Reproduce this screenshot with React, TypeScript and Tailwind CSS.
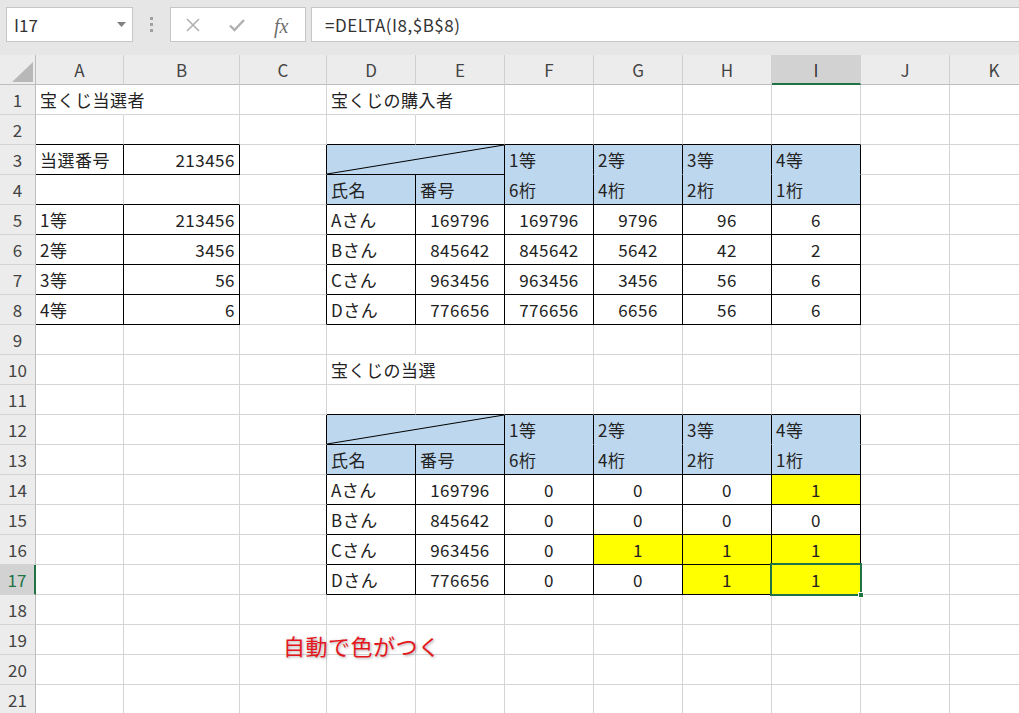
import React from "react";

const colLetters = ["A", "B", "C", "D", "E", "F", "G", "H", "I", "J", "K"];
const colW = [
  "w-[88px]",
  "w-[116px]",
  "w-[87px]",
  "w-[89px]",
  "w-[89px]",
  "w-[89px]",
  "w-[89px]",
  "w-[89px]",
  "w-[89px]",
  "w-[89px]",
  "w-[89px]",
];

type Cell = { t: string; a: "l" | "r" | "c"; bg?: "blue" | "yellow" };

const data: Record<string, Cell> = {};
const set = (r: number, c: number, t: string, a: "l" | "r" | "c" = "l", bg?: "blue" | "yellow") => {
  data[`${r},${c}`] = { t, a, bg };
};

set(1, 0, "宝くじ当選者");
set(1, 3, "宝くじの購入者");
set(3, 0, "当選番号");
set(3, 1, "213456", "r");
["1等", "2等", "3等", "4等"].forEach((t, i) => set(5 + i, 0, t));
["213456", "3456", "56", "6"].forEach((t, i) => set(5 + i, 1, t, "r"));
set(10, 3, "宝くじの当選");

const overflowCells = new Set(["1,0", "1,3", "10,3"]);

const headerTop = ["1等", "2等", "3等", "4等"];
const headerSub = ["氏名", "番号", "6桁", "4桁", "2桁", "1桁"];

[3, 12].forEach((r) => {
  headerTop.forEach((t, i) => set(r, 5 + i, t, "l", "blue"));
  headerSub.forEach((t, i) => set(r + 1, 3 + i, t, "l", "blue"));
});

const buyers = [
  ["Aさん", "169796", "169796", "9796", "96", "6"],
  ["Bさん", "845642", "845642", "5642", "42", "2"],
  ["Cさん", "963456", "963456", "3456", "56", "6"],
  ["Dさん", "776656", "776656", "6656", "56", "6"],
];
buyers.forEach((row, i) => {
  row.forEach((t, j) => set(5 + i, 3 + j, t, j === 0 ? "l" : "c"));
});

const winners = [
  ["Aさん", "169796", "0", "0", "0", "1"],
  ["Bさん", "845642", "0", "0", "0", "0"],
  ["Cさん", "963456", "0", "1", "1", "1"],
  ["Dさん", "776656", "0", "0", "1", "1"],
];
winners.forEach((row, i) => {
  row.forEach((t, j) => {
    const yellow = j >= 2 && t === "1";
    set(14 + i, 3 + j, t, j === 0 ? "l" : "c", yellow ? "yellow" : undefined);
  });
});

const inT = (r: number, c: number) =>
  (r === 3 && c >= 0 && c <= 1) ||
  (r >= 5 && r <= 8 && c >= 0 && c <= 1) ||
  (r >= 3 && r <= 8 && c >= 3 && c <= 8) ||
  (r >= 12 && r <= 17 && c >= 3 && c <= 8);

const FONT = "font-['Noto_Sans_CJK_JP','Liberation_Sans',sans-serif]";

function Diagonal() {
  return (
    <svg className="absolute inset-0 h-full w-full" preserveAspectRatio="none" viewBox="0 0 100 100">
      <line x1="0" y1="100" x2="100" y2="0" stroke="#000" strokeWidth="1" vectorEffect="non-scaling-stroke" />
    </svg>
  );
}

function GridCell({ r, c }: { r: number; c: number }) {
  const key = `${r},${c}`;
  const merged = (r === 3 || r === 12) && c === 3;
  const cell = data[key];
  const overflow = overflowCells.has(key);
  const rightBlack = merged ? true : inT(r, c) || inT(r, c + 1);
  let rightCls = rightBlack ? "border-r-black" : "border-r-[#d4d4d4]";
  if (overflow) rightCls = "border-r-transparent";
  let bottomCls = inT(r, c) || inT(r + 1, c) ? "border-b-black" : "border-b-[#d4d4d4]";
  if ((r === 3 || r === 12) && c >= 5 && c <= 8) bottomCls = "border-b-[#bdd7ee]";
  const bg =
    merged || cell?.bg === "blue"
      ? "bg-[#bdd7ee]"
      : cell?.bg === "yellow"
      ? "bg-[#ffff00]"
      : "bg-transparent";
  const align = cell?.a === "r" ? "justify-end pr-[4px]" : cell?.a === "c" ? "justify-center" : "justify-start pl-[4px]";
  const selected = r === 17 && c === 8;
  return (
    <div
      className={`relative flex h-[30px] shrink-0 items-center border-r border-b ${
        merged ? "w-[178px]" : colW[c]
      } ${rightCls} ${bottomCls} ${bg} ${align} pt-[1px] text-[17px] tracking-[0.5px] text-[#222] whitespace-nowrap`}
    >
      {merged && <Diagonal />}
      {cell && <span className={overflow ? "relative z-[1]" : ""}>{cell.t}</span>}
      {selected && (
        <div className="absolute left-[-2px] top-[-2px] right-[-2px] bottom-[-2px] z-10 border-2 border-[#217346]">
          <div className="absolute right-[-4px] bottom-[-4px] h-[6px] w-[6px] border border-white bg-[#217346]" />
        </div>
      )}
    </div>
  );
}

function Row({ r }: { r: number }) {
  const sel = r === 17;
  const cols: number[] = [];
  for (let c = 0; c < 11; c++) {
    if ((r === 3 || r === 12) && c === 4) continue;
    cols.push(c);
  }
  return (
    <div className="flex">
      <div
        className={`flex h-[30px] w-[36px] shrink-0 items-center justify-center border-b border-b-[#d4d4d4] pt-[1px] text-[17px] ${
          sel
            ? "bg-[#d2d2d2] text-[#217346] border-r-2 border-r-[#217346]"
            : "bg-[#ececec] text-[#444] border-r border-r-[#bdbdbd]"
        }`}
      >
        {r}
      </div>
      {cols.map((c) => (
        <GridCell key={c} r={r} c={c} />
      ))}
    </div>
  );
}

function HeaderRow() {
  return (
    <div className="flex">
      <div className="relative h-[30px] w-[36px] shrink-0 border-r border-b border-r-[#bdbdbd] border-b-[#bdbdbd] bg-[#ececec]">
        <svg className="absolute left-[12px] top-[7px]" width="21" height="20" viewBox="0 0 21 20">
          <polygon points="21,0 21,20 0,20" fill="#b8b8b8" />
        </svg>
      </div>
      {colLetters.map((l, c) => {
        const sel = c === 8;
        return (
          <div
            key={l}
            className={`flex h-[30px] shrink-0 items-center justify-center border-r border-r-[#d0d0d0] pt-[1px] text-[17px] ${colW[c]} ${
              sel
                ? "bg-[#d2d2d2] text-[#333] border-b-2 border-b-[#217346]"
                : "bg-[#ececec] text-[#444] border-b border-b-[#bdbdbd]"
            }`}
          >
            {l}
          </div>
        );
      })}
    </div>
  );
}

function Toolbar() {
  return (
    <div className="flex h-[55px] items-start bg-[#e6e6e6] pl-[6px] pt-[7px]">
      <div className="relative flex h-[35px] w-[127px] shrink-0 items-center border border-[#c6c6c6] bg-white pl-[7px] text-[17px] text-[#333]">
        I17
        <svg className="absolute right-[6px] top-[14px]" width="9" height="5" viewBox="0 0 9 5">
          <polygon points="0,0 9,0 4.5,5" fill="#808080" />
        </svg>
      </div>
      <div className="flex h-[35px] w-[37px] shrink-0 flex-col items-center justify-center gap-[3px]">
        <div className="h-[3px] w-[3px] bg-[#a0a0a0]" />
        <div className="h-[3px] w-[3px] bg-[#a0a0a0]" />
        <div className="h-[3px] w-[3px] bg-[#a0a0a0]" />
      </div>
      <div className="relative h-[35px] w-[136px] shrink-0 border border-[#c6c6c6] bg-white">
        <svg className="absolute left-[15px] top-[10px]" width="14" height="14" viewBox="0 0 14 14">
          <path d="M1 1 L13 13 M13 1 L1 13" stroke="#b0b0b0" strokeWidth="1.6" />
        </svg>
        <svg className="absolute left-[58px] top-[10px]" width="16" height="14" viewBox="0 0 16 14">
          <path d="M1 7.5 L5.5 12 L15 2" stroke="#b0b0b0" strokeWidth="2.4" fill="none" />
        </svg>
        <span className="absolute left-[103px] top-[3px] font-['Liberation_Serif',serif] text-[20px] italic text-[#707070]">
          fx
        </span>
      </div>
      <div className="ml-[5px] flex h-[35px] flex-1 items-center border border-r-0 border-[#c6c6c6] bg-white pl-[13px] text-[17px] tracking-[0.5px] text-[#333]">
        =DELTA(I8,$B$8)
      </div>
    </div>
  );
}

export default function App() {
  const rows: number[] = [];
  for (let r = 1; r <= 21; r++) rows.push(r);
  return (
    <div className={`relative h-[713px] w-[1019px] overflow-hidden bg-white ${FONT}`}>
      <Toolbar />
      <HeaderRow />
      {rows.map((r) => (
        <Row key={r} r={r} />
      ))}
      <div className="absolute left-[283px] top-[629px] text-[22px] tracking-[0.5px] text-[#e5171d] [text-shadow:1px_1px_3px_rgba(0,0,0,0.35)]">
        自動で色がつく
      </div>
    </div>
  );
}
